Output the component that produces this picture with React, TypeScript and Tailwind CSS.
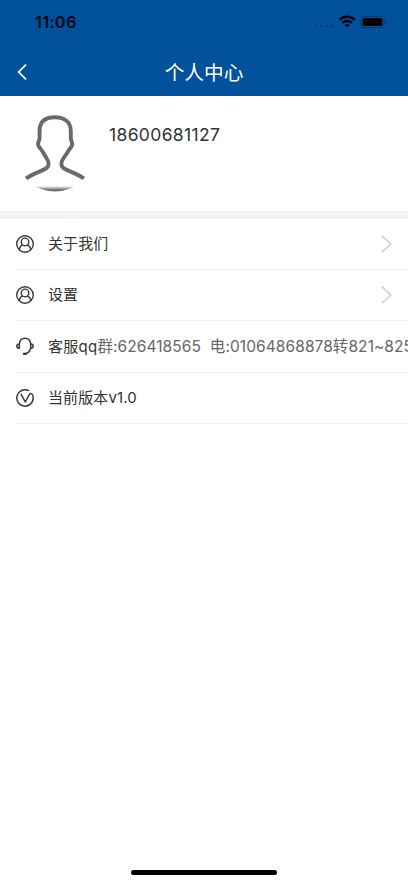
import type { ReactNode } from 'react';

function PersonIcon() {
  return (
    <svg className="size-[18px] shrink-0" viewBox="0 0 18 18" fill="none" stroke="#3a3a3a" strokeWidth="1.4">
      <circle cx="9" cy="9" r="8.3" />
      <circle cx="9" cy="6.9" r="3.8" />
      <path d="M3.3 15C3.5 12.3 4.8 10.6 6.9 10M14.7 15C14.5 12.3 13.2 10.6 11.1 10" />
    </svg>
  );
}

function HeadsetIcon() {
  return (
    <svg className="mb-px size-[18px] shrink-0" viewBox="0 0 18 18" fill="none" stroke="#3a3a3a" strokeWidth="1.5" strokeLinecap="round">
      <path d="M3.3 6.8C3.7 3.5 6 1.2 9 1.2s5.3 2.3 5.7 5.6" />
      <path d="M3.3 6.9v4.4C1.600 11.300.8 10.400.8 9.100s.8-2.200 2.500-2.200zM14.700 6.900v4.400c1.700 0 2.500-.9 2.500-2.200s-.8-2.200-2.500-2.200z" />
      <path d="M14.5 11.500c-.6 2.900-2.200 4.500-4.900 5" />
      <path d="M7.900 16.900h1.900" strokeWidth="2.2" />
    </svg>
  );
}

function VersionIcon() {
  return (
    <svg className="size-[18px] shrink-0" viewBox="0 0 18 18" fill="none" stroke="#3a3a3a" strokeWidth="1.5" strokeLinecap="round" strokeLinejoin="round">
      <path d="M12.4 1.5A8.2 8.2 0 1 0 17.2 9c0-1.6-.4-2.9-1.2-3.9-.8-.9-2.1-.8-2.6.3L9.3 13 5.2 5.3" />
    </svg>
  );
}

function Chevron() {
  return (
    <svg className="mr-4 ml-auto h-[18px] w-[11px] shrink-0" viewBox="0 0 11 18" fill="none" stroke="#cfcfcf" strokeWidth="1.5">
      <path d="M.8.6 9.8 9 .8 17.4" />
    </svg>
  );
}

function Row({ icon, children, arrow, height = 'h-[51px]' }: { icon: ReactNode; children: ReactNode; arrow?: boolean; height?: string }) {
  return (
    <div className={`ml-4 flex items-center border-b border-[#f0f0f0] ${height}`}>
      {icon}
      <div className="ml-3.5 pt-px text-[15px] tracking-[0.1px] whitespace-nowrap text-[#333]">{children}</div>
      {arrow && <Chevron />}
    </div>
  );
}

export default function App() {
  return (
    <div className="flex h-[883px] w-[408px] flex-col overflow-hidden bg-white font-['Inter','Noto_Sans_CJK_SC',sans-serif]">
      <header className="h-24 shrink-0 bg-[#01519c]">
        <div className="flex h-[44px] items-center pl-[35px] text-[#050a14]">
          <span className="text-[16.5px] font-semibold tracking-[0.2px]">11:06</span>
          <svg className="mr-[20px] ml-auto h-[14px] w-[74px]" viewBox="0 0 74 14">
            <g fill="#063d78">
              <circle cx="2.5" cy="11" r="1.5" />
              <circle cx="7.8" cy="11" r="1.5" />
              <circle cx="13" cy="11" r="1.5" />
              <circle cx="18.2" cy="11" r="1.5" />
            </g>
            <g fill="none" stroke="#020812" strokeWidth="2.4">
              <path d="M25.4 4.8a11.2 11.2 0 0 1 15.4 0" />
              <path d="M28.2 7.9a7.1 7.1 0 0 1 9.8 0" />
            </g>
            <path d="M30.5 10.1a3.8 3.8 0 0 1 5.2 0l-2.6 2.7z" fill="#020812" />
            <rect x="47" y="1.5" width="23" height="11" rx="3" fill="none" stroke="#073765" />
            <rect x="48.7" y="3" width="19.6" height="8" rx="1.5" fill="#020305" />
            <path d="M71.3 5.2c1.6.6 1.6 3 0 3.6z" fill="#073765" />
          </svg>
        </div>
        <div className="grid h-[56px] grid-cols-[60px_1fr_60px] items-center text-white">
          <svg className="ml-[17px] h-[16px] w-[10px]" viewBox="0 0 10 16" fill="none" stroke="currentColor" strokeWidth="1.7">
            <path d="M9 .7 1.6 8 9 15.3" />
          </svg>
          <h1 className="pt-0.5 text-center text-[19.7px] leading-7 font-normal">个人中心</h1>
        </div>
      </header>

      <section className="flex h-[115px] shrink-0">
        <svg className="mt-[17px] ml-[16px] size-[80px] shrink-0" viewBox="16 113 80 80" fill="none">
          <defs>
            <clipPath id="avatar">
              <circle cx="55" cy="152" r="39.5" />
            </clipPath>
            <filter id="soft">
              <feGaussianBlur stdDeviation=".7" />
            </filter>
            <linearGradient id="base" x1="0" y1="0" x2="0" y2="1">
              <stop offset="0" stopColor="#fff" />
              <stop offset=".6" stopColor="#777" />
              <stop offset="1" stopColor="#666" />
            </linearGradient>
          </defs>
          <g clipPath="url(#avatar)">
            <path filter="url(#soft)" d="M26 178.5C33 173.5 41 171.5 46 168.5C49.5 166 49 162 47 159L42.5 151.5C41 148.5 38 147 38 144C38 142 39.6 140.5 39.6 138.5V131C39.6 122 45 117.3 54.7 117.3S70.8 122 70.8 131V138.5C70.8 140.5 72.3 142 72.3 144C72.3 147 69.5 148.5 68 151.5L63 159C61 162 60.5 166 64 168.5C69 171.5 77 173.5 84 178.5" stroke="#6a6a6a" strokeWidth="3.9" />
            <rect x="16" y="186" width="80" height="6" fill="url(#base)" />
          </g>
        </svg>
        <div className="mt-[26px] ml-[13px] text-[17.5px] leading-[26px] tracking-[0.35px] text-[#333]">18600681127</div>
      </section>
      <div className="h-2 shrink-0 bg-[#f3f3f3]" />

      <main>
        <Row icon={<PersonIcon />} arrow>关于我们</Row>
        <Row icon={<PersonIcon />} arrow>设置</Row>
        <Row icon={<HeadsetIcon />} height="h-[52px]">
          <span className="tracking-[0.25px]">客服qq</span>
          <span className="text-[15.5px] tracking-[0.08px] text-[#666]">群:626418565&nbsp; 电:01064868878转821~825</span>
        </Row>
        <Row icon={<VersionIcon />}>当前版本v1.0</Row>
      </main>

      <div className="mx-auto mt-auto mb-2 h-[5px] w-[146px] rounded-full bg-black" />
    </div>
  );
}
